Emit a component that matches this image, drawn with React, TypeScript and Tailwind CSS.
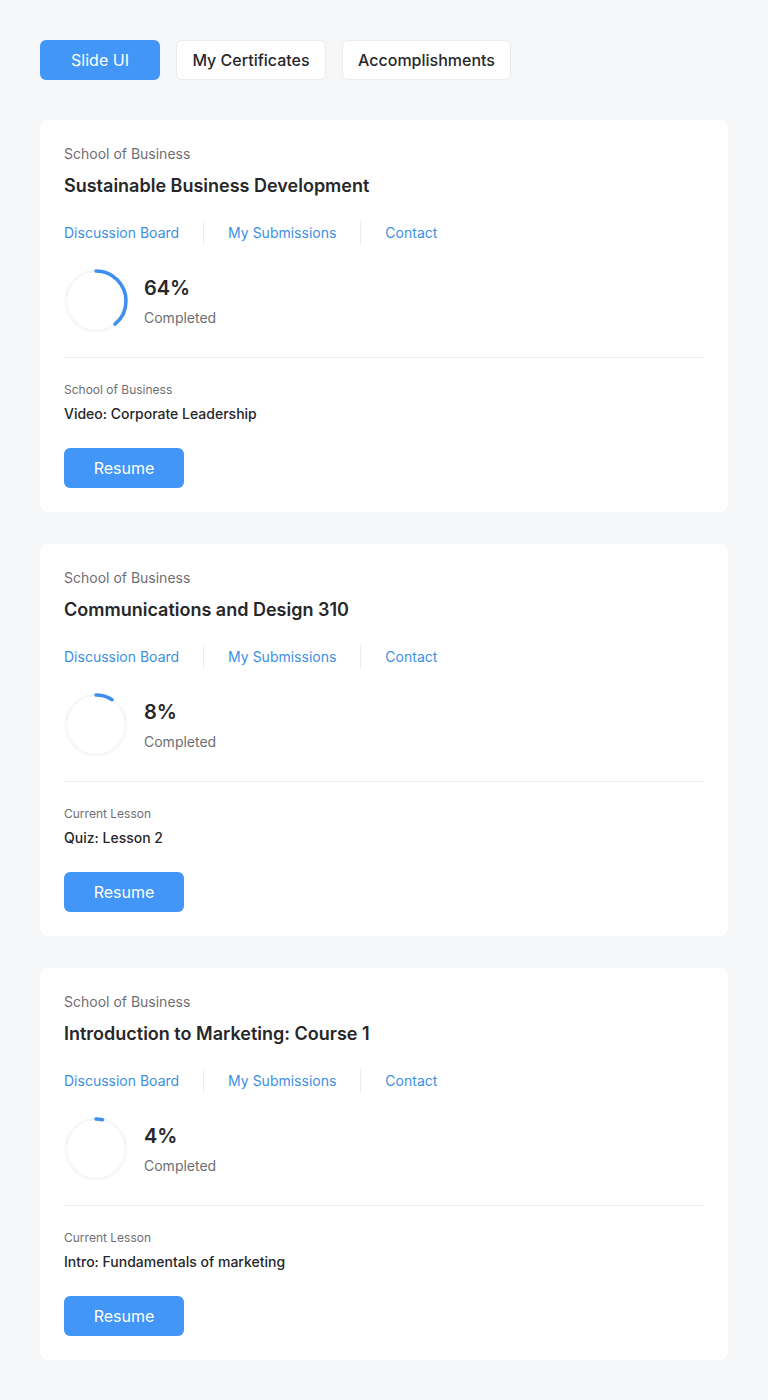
import React from "react";

type Course = {
  title: string;
  pct: string;
  frac: number;
  label: string;
  lesson: string;
};

const courses: Course[] = [
  { title: "Sustainable Business Development", pct: "64%", frac: 0.39, label: "School of Business", lesson: "Video: Corporate Leadership" },
  { title: "Communications and Design 310", pct: "8%", frac: 0.09, label: "Current Lesson", lesson: "Quiz: Lesson 2" },
  { title: "Introduction to Marketing: Course 1", pct: "4%", frac: 0.035, label: "Current Lesson", lesson: "Intro: Fundamentals of marketing" },
];

function Ring({ frac }: { frac: number }) {
  const r = 30;
  const c = 2 * Math.PI * r;
  return (
    <svg width="64" height="64" viewBox="0 0 64 64" className="shrink-0">
      <circle cx="32" cy="32" r={r} fill="none" stroke="#f6f7f8" strokeWidth="3" />
      <circle
        cx="32"
        cy="32"
        r={r}
        fill="none"
        stroke="#3f8ff0"
        strokeWidth="3.5"
        strokeLinecap="round"
        strokeDasharray={`${c * frac} ${c}`}
        transform="rotate(-90 32 32)"
      />
    </svg>
  );
}

function Card({ course }: { course: Course }) {
  return (
    <div className="bg-white rounded-lg p-6">
      <div className="text-sm leading-5 text-[#6f6f73]">School of Business</div>
      <div className="mt-2 text-lg leading-7 font-semibold text-[#27272a]">{course.title}</div>
      <div className="mt-[21px] flex items-center text-sm leading-5 text-[#3d8fe6]">
        <span className="pr-6">Discussion Board</span>
        <span className="w-px h-6 bg-[#ececee]" />
        <span className="px-6">My Submissions</span>
        <span className="w-px h-6 bg-[#ececee]" />
        <span className="pl-6">Contact</span>
      </div>
      <div className="mt-6 flex items-center gap-4">
        <Ring frac={course.frac} />
        <div className="flex flex-col">
          <span className="text-xl leading-7 font-semibold text-[#27272a]">{course.pct}</span>
          <span className="mt-1.5 text-sm leading-5 text-[#6f6f73]">Completed</span>
        </div>
      </div>
      <div className="mt-6 h-px bg-[#ededef]" />
      <div className="mt-6 text-xs leading-4 text-[#6f6f73]">{course.label}</div>
      <div className="mt-1.5 text-sm leading-5 font-medium text-[#27272a]">{course.lesson}</div>
      <button className="mt-6 w-[120px] h-10 rounded-md bg-[#4196f7] text-white text-base">Resume</button>
    </div>
  );
}

export default function App() {
  return (
    <div className="min-h-[1400px] bg-[#f6f7f9] px-10 pt-10 pb-10" style={{ fontFamily: "Inter, 'Noto Sans', sans-serif" }}>
      <div className="flex gap-4">
        <button className="w-[120px] h-10 rounded-md bg-[#4196f7] text-white text-base">Slide UI</button>
        <button className="w-[150px] h-10 rounded-md bg-white border border-[#ebebed] text-[#27272a] text-base font-medium">My Certificates</button>
        <button className="w-[169px] h-10 rounded-md bg-white border border-[#ebebed] text-[#27272a] text-base font-medium">Accomplishments</button>
      </div>
      <div className="mt-10 flex flex-col gap-8">
        {courses.map((c) => (
          <Card key={c.title} course={c} />
        ))}
      </div>
    </div>
  );
}
